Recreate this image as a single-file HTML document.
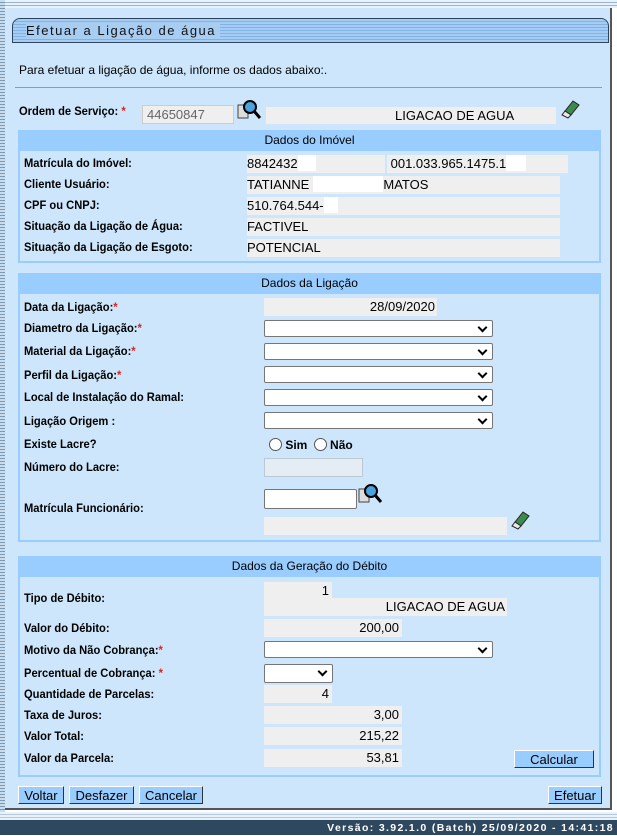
<!DOCTYPE html>
<html><head><meta charset="utf-8"><style>
body{margin:0;width:617px;height:835px;position:relative;background:#fff;font-family:"Liberation Sans",Arial,sans-serif;font-size:12px;color:#000;overflow:hidden}
.a{position:absolute}
.stripe{left:0;top:0;width:5px;height:815px;background:repeating-linear-gradient(#c8dcee 0 2px,#7a9ab8 2px 3px)}
.topstripe{left:0;top:0;width:617px;height:8px;background:repeating-linear-gradient(#e8f2fc 0 2px,#9ab4cc 2px 3px)}
.panel{left:5px;top:8px;width:605px;height:800px;background:#cde6fb;border-right:2px solid #555;border-bottom:2px solid #555}
.title{left:12px;top:18px;width:595px;height:23px;border:1px solid #2c4460;border-radius:8px 8px 0 0;background:repeating-linear-gradient(#a8cdf2 0 2px,#7fb2e6 2px 3px);}
.title span{position:absolute;left:13px;top:4px;font-size:13px;letter-spacing:1.5px;color:#111;background:#a8cdf2;padding-right:4px}
.l{position:absolute;left:24px;font-weight:bold;transform:scaleX(.93);transform-origin:left;white-space:nowrap}
.r{color:#d22}
.f{position:absolute;background:#efefef;height:18px;line-height:18px;white-space:nowrap;overflow:hidden;font-size:13px}
.sec{position:absolute;left:18px;width:579px;border:2px solid #99ccff;border-top:none;background:#cde6fb}
.sh{position:absolute;left:18px;width:583px;height:21px;background:#99ccff;text-align:center;line-height:21px}
.sel{position:absolute;height:17px;background:#fff;border:1px solid #767676;border-radius:2px;box-sizing:border-box}
.sel:after{content:"";position:absolute;right:6px;top:3px;width:5px;height:5px;border-right:2px solid #000;border-bottom:2px solid #000;transform:rotate(45deg)}
.btn{position:absolute;height:18px;line-height:18px;background:#99ccff;border:1px solid #fff;border-right-color:#333;border-bottom-color:#333;text-align:center;font-size:13px;box-sizing:border-box}
.rad{display:inline-block;width:11px;height:11px;border:1px solid #555;border-radius:50%;background:#fff;vertical-align:-2px}
</style></head><body>
<div class="a topstripe"></div>
<div class="a panel"></div>
<div class="a stripe"></div>
<div class="a title"><span>Efetuar a Ligação de água</span></div>
<div class="a" style="left:19px;top:63px">Para efetuar a ligação de água, informe os dados abaixo:.</div>
<div class="a" style="left:15px;top:87px;width:587px;height:1px;background:#999"></div>

<div class="l" style="top:104px;left:19px">Ordem de Serviço: <span class="r">*</span></div>
<div class="a" style="left:142px;top:105px;width:92px;height:19px;background:#efefef;border:1px solid #ccc;box-sizing:border-box;color:#666;line-height:18px;padding-left:4px;font-size:13px">44650847</div>
<svg class="a" style="left:237px;top:99px" width="24" height="22"><rect x="1" y="6" width="10" height="13" fill="#ddd" stroke="#444"/><circle cx="13" cy="8" r="6" fill="#4aa3df" stroke="#000" stroke-width="2"/><line x1="17" y1="12" x2="23" y2="19" stroke="#000" stroke-width="3"/></svg>
<div class="f" style="left:266px;top:107px;width:290px;height:17px"><span style="position:absolute;left:129px">LIGACAO DE AGUA</span></div>
<svg class="a" style="left:560px;top:98px" width="20" height="22"><path d="M5 13 L13 3 L19 7 L11 17 Z" fill="#3c8a4c" stroke="#222"/><path d="M5 13 L11 17 L8 20 L2 17 Z" fill="#e8e8e8" stroke="#222"/></svg>

<div class="sh" style="top:130px">Dados do Imóvel</div>
<div class="sec" style="top:151px;height:110px"></div>
<div class="l" style="top:156px">Matrícula do Imóvel:</div>
<div class="f" style="left:247px;top:155px;width:138px">8842432<span style="display:inline-block;width:18px;height:16px;background:#fff;vertical-align:-3px"></span></div>
<div class="f" style="left:387px;top:155px;width:181px">&nbsp;001.033.965.1475.1<span style="display:inline-block;width:20px;height:16px;background:#fff;vertical-align:-3px"></span></div>
<div class="l" style="top:177px">Cliente Usuário:</div>
<div class="f" style="left:247px;top:176px;width:313px">TATIANNE<span style="display:inline-block;width:70px;height:16px;background:#fff;vertical-align:-3px;margin-left:4px"></span>MATOS</div>
<div class="l" style="top:198px">CPF ou CNPJ:</div>
<div class="f" style="left:247px;top:197px;width:313px">510.764.544-<span style="display:inline-block;width:14px;height:16px;background:#fff;vertical-align:-3px"></span></div>
<div class="l" style="top:219px">Situação da Ligação de Água:</div>
<div class="f" style="left:247px;top:218px;width:313px">FACTIVEL</div>
<div class="l" style="top:240px">Situação da Ligação de Esgoto:</div>
<div class="f" style="left:247px;top:239px;width:313px">POTENCIAL</div>

<div class="sh" style="top:273px">Dados da Ligação</div>
<div class="sec" style="top:294px;height:246px"></div>
<div class="l" style="top:300px">Data da Ligação:<span class="r">*</span></div>
<div class="f" style="left:264px;top:298px;width:173px;text-align:right"><span style="padding-right:2px">28/09/2020</span></div>
<div class="l" style="top:321px">Diametro da Ligação:<span class="r">*</span></div>
<div class="sel" style="left:264px;top:320px;width:229px"></div>
<div class="l" style="top:344px">Material da Ligação:<span class="r">*</span></div>
<div class="sel" style="left:264px;top:343px;width:229px"></div>
<div class="l" style="top:368px">Perfil da Ligação:<span class="r">*</span></div>
<div class="sel" style="left:264px;top:366px;width:229px"></div>
<div class="l" style="top:390px">Local de Instalação do Ramal:</div>
<div class="sel" style="left:264px;top:389px;width:229px"></div>
<div class="l" style="top:414px">Ligação Origem :</div>
<div class="sel" style="left:264px;top:412px;width:229px"></div>
<div class="l" style="top:437px">Existe Lacre?</div>
<div class="a" style="left:269px;top:438px;font-weight:bold"><span class="rad"></span> Sim <span class="rad" style="margin-left:3px"></span> Não</div>
<div class="l" style="top:460px">Número do Lacre:</div>
<div class="a" style="left:264px;top:458px;width:99px;height:19px;background:#e4ecf4;border:1px solid #bcc8d4;box-sizing:border-box"></div>
<div class="l" style="top:501px">Matrícula Funcionário:</div>
<div class="a" style="left:264px;top:489px;width:93px;height:20px;background:#fff;border:1px solid #767676;box-sizing:border-box;border-radius:2px"></div>
<svg class="a" style="left:358px;top:483px" width="24" height="22"><rect x="1" y="6" width="10" height="13" fill="#ddd" stroke="#444"/><circle cx="13" cy="8" r="6" fill="#4aa3df" stroke="#000" stroke-width="2"/><line x1="17" y1="12" x2="23" y2="19" stroke="#000" stroke-width="3"/></svg>
<div class="f" style="left:264px;top:517px;width:243px"></div>
<svg class="a" style="left:510px;top:509px" width="20" height="22"><path d="M5 13 L13 3 L19 7 L11 17 Z" fill="#3c8a4c" stroke="#222"/><path d="M5 13 L11 17 L8 20 L2 17 Z" fill="#e8e8e8" stroke="#222"/></svg>

<div class="sh" style="top:556px">Dados da Geração do Débito</div>
<div class="sec" style="top:577px;height:198px"></div>
<div class="l" style="top:591px">Tipo de Débito:</div>
<div class="f" style="left:264px;top:582px;width:68px;text-align:right"><span style="padding-right:3px">1</span></div>
<div class="f" style="left:264px;top:598px;width:243px;text-align:right"><span style="padding-right:2px">LIGACAO DE AGUA</span></div>
<div class="l" style="top:621px">Valor do Débito:</div>
<div class="f" style="left:264px;top:619px;width:138px;text-align:right"><span style="padding-right:3px">200,00</span></div>
<div class="l" style="top:643px">Motivo da Não Cobrança:<span class="r">*</span></div>
<div class="sel" style="left:264px;top:641px;width:229px"></div>
<div class="l" style="top:666px">Percentual de Cobrança: <span class="r">*</span></div>
<div class="sel" style="left:264px;top:664px;width:69px;height:19px"></div>
<div class="l" style="top:687px">Quantidade de Parcelas:</div>
<div class="f" style="left:264px;top:685px;width:68px;text-align:right"><span style="padding-right:3px">4</span></div>
<div class="l" style="top:708px">Taxa de Juros:</div>
<div class="f" style="left:264px;top:706px;width:138px;text-align:right"><span style="padding-right:3px">3,00</span></div>
<div class="l" style="top:729px">Valor Total:</div>
<div class="f" style="left:264px;top:727px;width:138px;text-align:right"><span style="padding-right:3px">215,22</span></div>
<div class="l" style="top:751px">Valor da Parcela:</div>
<div class="f" style="left:264px;top:749px;width:138px;text-align:right"><span style="padding-right:3px">53,81</span></div>
<div class="btn" style="left:514px;top:750px;width:80px">Calcular</div>

<div class="btn" style="left:18px;top:786px;width:46px">Voltar</div>
<div class="btn" style="left:69px;top:786px;width:65px">Desfazer</div>
<div class="btn" style="left:139px;top:786px;width:64px">Cancelar</div>
<div class="btn" style="left:548px;top:786px;width:54px">Efetuar</div>

<div class="a" style="left:0;top:812px;width:617px;height:8px;background:repeating-linear-gradient(#e8f2fc 0 2px,#b4c8da 2px 3px)"></div>
<div class="a" style="left:0;top:820px;width:617px;height:15px;background:#2e4860;color:#fff;font-weight:bold;font-size:10.5px;letter-spacing:1.35px;text-align:right;line-height:16px"><span style="padding-right:3px">Versão: 3.92.1.0 (Batch) 25/09/2020 - 14:41:18</span></div>
</body></html>
